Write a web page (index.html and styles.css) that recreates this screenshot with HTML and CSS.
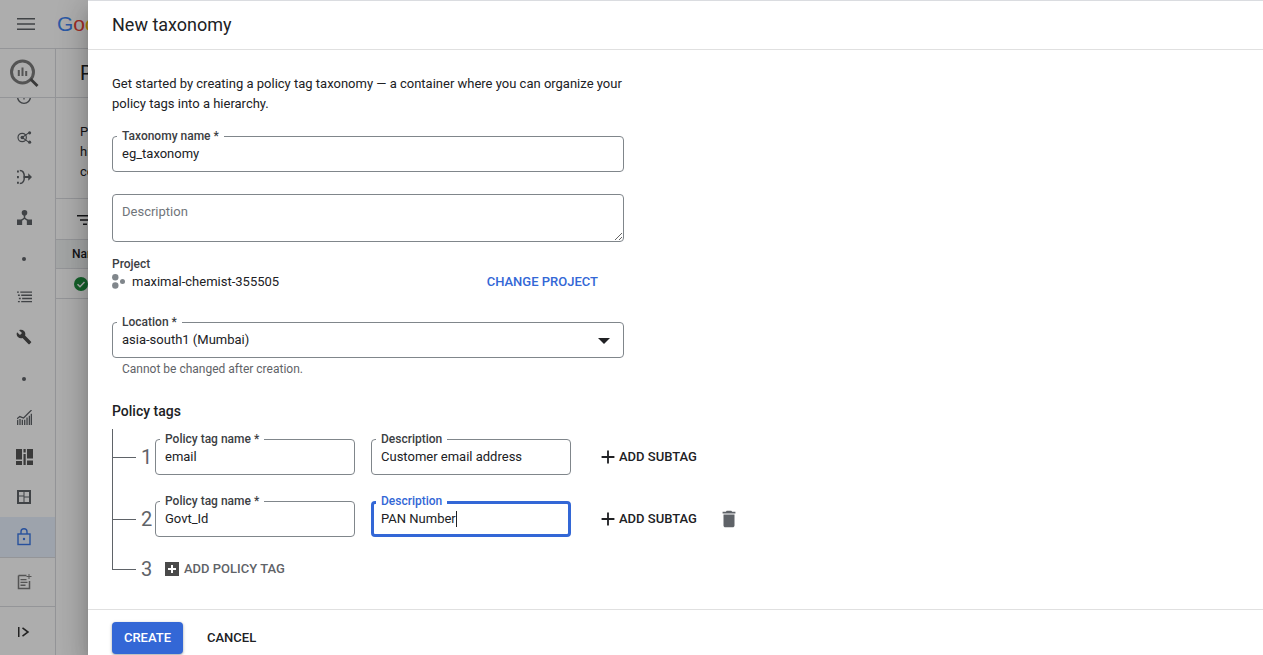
FILE: index.html
```html
<!DOCTYPE html>
<html lang="en">
<head>
<meta charset="utf-8">
<title>New taxonomy</title>
<link rel="stylesheet" href="styles.css">
</head>
<body>
<div class="app">
  <header class="topbar">
    <button class="menu-btn" aria-label="Menu">
      <svg viewBox="0 0 20 14" width="20" height="14"><path d="M1 1h18v1.600H1zM1 6.200h18v1.600H1zM1 11.400h18V13H1z"/></svg>
    </button>
    <div class="google"><span class="g-b">G</span><span class="g-r">o</span><span class="g-y">o</span><span class="g-b">g</span><span class="g-g">l</span><span class="g-r">e</span></div>
  </header>
  <div class="below">
    <aside class="rail">
      <div class="rail-logo">
        <svg viewBox="0 0 30 30" width="30" height="30"><circle cx="12.500" cy="14" r="11" fill="none" stroke="#7d7d7d" stroke-width="3"/><path d="M7.800 12h2v6h-2zM11.500 9.500h2V18h-2zM15.200 13h2v5h-2z" fill="#7d7d7d"/><path d="M19.500 22l2-2 7 7-2 2z" fill="#555"/></svg>
      </div>
      <nav class="rail-nav">
        <div class="rail-item rail-first"><svg viewBox="0 0 18 18" width="18" height="18"><circle cx="9" cy="9" r="6.400" fill="none" stroke="#5f6368" stroke-width="1.400"/><path d="M8.400 5h1.200v6.500H8.400z" fill="#5f6368"/></svg></div>
        <div class="rail-item"><svg viewBox="0 0 16 14" width="15" height="13"><circle cx="5.500" cy="7" r="4.500" fill="none" stroke="#5f6368" stroke-width="1.300"/><circle cx="5.500" cy="7" r="1.800" fill="#5f6368"/><path d="M5.500 7l7-5M5.500 7l7 5" stroke="#5f6368" stroke-width="1.200"/><circle cx="13.500" cy="2" r="1.700" fill="#5f6368"/><circle cx="13.500" cy="12" r="1.700" fill="#5f6368"/></svg></div>
        <div class="rail-item"><svg viewBox="0 0 16 16" width="15" height="16"><path d="M0 1h2v2.200H0zM0 7h2v2.200H0zM0 13h2v2.200H0z" fill="#5f6368"/><path d="M3 1c3 0 4.800 2.800 4.800 7S6 15 3 15" fill="none" stroke="#5f6368" stroke-width="1.600"/><path d="M7 7h5V4l4 4-4 4V9H7z" fill="#5f6368"/></svg></div>
        <div class="rail-item"><svg viewBox="0 0 16 16" width="15" height="15"><circle cx="8" cy="3" r="3" fill="#5f6368"/><path d="M7.200 5h1.600v3.300l3.600 2.500-.9 1.200L8 9.700 4.500 12l-.9-1.200 3.600-2.500z" fill="#5f6368"/><path d="M0 10h5.500v6H0zM10.500 10H16v6h-5.500z" fill="#5f6368"/></svg></div>
        <div class="rail-item"><span class="rail-dot"></span></div>
        <div class="rail-item"><svg viewBox="0 0 16 12" width="15" height="12"><path d="M0 0h2v1.500H0zM3.500 0H16v1.500H3.500zM1 3.400h2v1.500H1zM4.500 3.400H16v1.500H4.500zM2 6.800h2v1.500H2zM5.500 6.800H16v1.500H5.500zM1 10.200h2v1.500H1zM4.500 10.200H16v1.500H4.500z" fill="#5f6368"/></svg></div>
        <div class="rail-item"><svg viewBox="0 0 24 24" width="16" height="16"><path fill="#4d4d4d" d="M22.700 19l-9.100-9.100c.9-2.300.4-5-1.500-6.900-2-2-5-2.400-7.400-1.300L9 6 6 9 1.600 4.700C.4 7.100.9 10.100 2.900 12.100c1.900 1.900 4.600 2.400 6.900 1.500l9.100 9.100c.4.400 1 .4 1.400 0l2.300-2.300c.5-.4.5-1.100.1-1.400z"/></svg></div>
        <div class="rail-item"><span class="rail-dot"></span></div>
        <div class="rail-item"><svg viewBox="0 0 16 16" width="15" height="15"><path d="M0 9.500l3-2.500L7 8.500l5-5L15.500 0" fill="none" stroke="#5f6368" stroke-width="1.300"/><path d="M0 11l1.400-1V16H0zM2.500 9.500h1.400V16H2.500zM5 10.500h1.400V16H5zM7.500 10.500h1.400V16H7.500zM10 8h1.400v8H10zM12.500 6h1.400v10h-1.400zM14.600 4H16v12h-1.400z" fill="#5f6368"/></svg></div>
        <div class="rail-item"><svg viewBox="0 0 17 16" width="17" height="16"><path d="M0 0h6v10.500H0zM0 12h6v4H0zM7.500 0h2.200v3.500H7.500zM7.500 5h2.200v11H7.500zM11 0h6v9.500h-6zM11 11.500h6V16h-6z" fill="#565656"/></svg></div>
        <div class="rail-item"><svg viewBox="0 0 14 14" width="14" height="14"><path d="M0 0h14v14H0z" fill="#5f6368"/><path d="M2 2h4.500v3.500H2zM7.500 2H12v4.500H7.500zM2 6.500h4.500V12H2zM7.500 7.500H12V12H7.500z" fill="#fff"/></svg></div>
        <div class="rail-item rail-active"><svg viewBox="0 0 14 18" width="14" height="18"><rect x="1" y="6" width="12" height="10.500" fill="none" stroke="#3b78e7" stroke-width="1.400"/><path d="M4 6V3.800a3 3 0 0 1 6 0V6" fill="none" stroke="#3b78e7" stroke-width="1.400"/><circle cx="7" cy="11" r="1.200" fill="#3b78e7"/></svg></div>
      </nav>
      <div class="rail-foot-item"><svg viewBox="0 0 15 16" width="15" height="16"><path d="M1.500 1.500h8M1.500 1.500v13h11V7" fill="none" stroke="#7d7d7d" stroke-width="1.500"/><path d="M3.500 5h6v1.300h-6zM3.500 7.800h7v1.300h-7zM3.500 10.600h5v1.300h-5zM11.500 0h1v2h2v1h-2v2h-1V3h-2V2h2z" fill="#7d7d7d"/></svg></div>
      <div class="rail-foot-item rail-expand"><svg viewBox="0 0 12 10" width="12" height="10"><path d="M0 0h1.500v10H0z" fill="#333"/><path d="M4.500 .8L10 5 4.500 9.200" fill="none" stroke="#333" stroke-width="1.600"/></svg></div>
    </aside>
    <main class="page">
      <h1 class="page-title">Policy tag taxonomies</h1>
      <p class="page-intro">Policy tags let you control access<br>hierarchies of tags across your<br>columns in your tables.</p>
      <div class="page-filter">
        <svg viewBox="0 0 16 10" width="16" height="10"><path d="M0 0h16v1.600H0zM3 4.200h10v1.600H3zM6 8.400h4V10H6z" fill="#202124"/></svg>
      </div>
      <div class="table-head">Name</div>
      <div class="table-row">
        <svg viewBox="0 0 14 14" width="14" height="14"><circle cx="7" cy="7" r="7" fill="#1e8e3e"/><path d="M3.500 7.200l2.500 2.500 4.500-4.700" fill="none" stroke="#fff" stroke-width="1.500"/></svg>
      </div>
    </main>
  </div>

  <div class="scrim"></div>

  <section class="panel">
    <div class="panel-head"><h2 class="panel-title">New taxonomy</h2></div>
    <div class="panel-body">
      <p class="intro">Get started by creating a policy tag taxonomy — a container where you can organize your policy tags into a hierarchy.</p>

      <div class="field field-wide field-name">
        <span class="field-label">Taxonomy name *</span>
        <div class="field-value">eg_taxonomy</div>
      </div>

      <div class="field field-wide field-area">
        <textarea class="field-textarea" placeholder="Description"></textarea>
      </div>

      <div class="project">
        <div class="project-label">Project</div>
        <div class="project-row">
          <div class="project-name">
            <svg viewBox="0 0 13 15" width="13" height="15"><circle cx="3.300" cy="3.300" r="3.200" fill="#80868b"/><circle cx="3.300" cy="11.500" r="3.200" fill="#80868b"/><circle cx="10.500" cy="7.400" r="2.500" fill="#80868b"/></svg>
            <span>maximal-chemist-355505</span>
          </div>
          <span class="link-btn">CHANGE PROJECT</span>
        </div>
      </div>

      <div class="field field-wide field-location">
        <span class="field-label">Location *</span>
        <div class="field-value">asia-south1 (Mumbai)</div>
        <span class="select-arrow"></span>
      </div>
      <div class="hint">Cannot be changed after creation.</div>

      <h3 class="section-title">Policy tags</h3>

      <div class="tree">
        <div class="tree-row">
          <span class="branch"></span><span class="num">1</span>
          <div class="field field-tag">
            <span class="field-label">Policy tag name *</span>
            <div class="field-value">email</div>
          </div>
          <div class="field field-tag">
            <span class="field-label">Description</span>
            <div class="field-value">Customer email address</div>
          </div>
          <span class="subtag">
            <svg viewBox="0 0 24 24" width="22" height="22"><path d="M19 13h-6v6h-2v-6H5v-2h6V5h2v6h6v2z"/></svg>
            <span class="action-text">ADD SUBTAG</span>
          </span>
        </div>
        <div class="tree-row">
          <span class="branch"></span><span class="num">2</span>
          <div class="field field-tag">
            <span class="field-label">Policy tag name *</span>
            <div class="field-value">Govt_Id</div>
          </div>
          <div class="field field-tag field-focus">
            <span class="field-label">Description</span>
            <div class="field-value">PAN Number<span class="caret"></span></div>
          </div>
          <span class="subtag">
            <svg viewBox="0 0 24 24" width="22" height="22"><path d="M19 13h-6v6h-2v-6H5v-2h6V5h2v6h6v2z"/></svg>
            <span class="action-text">ADD SUBTAG</span>
          </span>
          <svg class="trash" viewBox="0 0 24 24" width="22" height="22"><path d="M6 19c0 1.100.9 2 2 2h8c1.100 0 2-.9 2-2V7H6v12zM19 4h-3.500l-1-1h-5l-1 1H5v2h14V4z"/></svg>
        </div>
        <div class="tree-row tree-last">
          <span class="branch"></span><span class="num">3</span>
          <span class="add-tag">
            <svg viewBox="0 0 14 14" width="14" height="14"><path d="M0 0h14v14H0z" fill="#4a4a4a"/><path d="M6 3h2v3h3v2H8v3H6V8H3V6h3z" fill="#fff"/></svg>
            <span class="action-text">ADD POLICY TAG</span>
          </span>
        </div>
      </div>
    </div>
    <footer class="panel-foot">
      <span class="btn-create">CREATE</span>
      <span class="btn-cancel">CANCEL</span>
    </footer>
  </section>
</div>
</body>
</html>
```
FILE: styles.css
```css
* { box-sizing: border-box; }
html, body { margin: 0; height: 100%; overflow: hidden; }
body { font-family: Roboto, "Liberation Sans", sans-serif; color: #202124; background: #fff; }
h1, h2, h3, p { margin: 0; font-weight: 400; }

.app { position: relative; width: 1263px; height: 655px; overflow: hidden; }

/* background page */
.topbar { height: 49px; display: flex; align-items: center; border-bottom: 1px solid #dadce0; }
.menu-btn { width: 52px; height: 48px; padding: 0; border: 0; background: none; display: flex; align-items: center; justify-content: center; }
.menu-btn svg { fill: #5f6368; }
.google { font: 400 21px "Liberation Sans", sans-serif; margin-left: 5px; }
.g-b { color: #4285f4; } .g-r { color: #ea4335; } .g-y { color: #fbbc05; } .g-g { color: #34a853; }

.below { display: flex; height: 606px; }
.rail { width: 56px; flex: none; border-right: 1px solid #dadce0; display: flex; flex-direction: column; }
.rail-logo { height: 49px; flex: none; display: flex; align-items: center; padding-left: 10px; border-bottom: 1px solid #dadce0; }
.rail-nav { height: 460px; flex: none; overflow: hidden; border-bottom: 1px solid #dadce0; }
.rail-item { height: 40px; display: flex; align-items: center; justify-content: center; padding-right: 7px; }
.rail-first { margin-top: -21px; }
.rail-dot { width: 4px; height: 4px; margin-top: 3px; border-radius: 50%; background: #5f6368; }
.rail-active { background: #e8f0fe; }
.rail-foot-item { height: 49px; flex: none; display: flex; align-items: center; justify-content: center; padding-right: 7px; border-bottom: 1px solid #dadce0; }
.rail-expand { border-bottom: 0; }

.page { flex: 1; min-width: 0; }
.page-title { height: 49px; font-size: 20px; line-height: 48px; padding-left: 24px; border-bottom: 1px solid #dadce0; }
.page-intro { height: 101px; padding: 24px 0 0 24px; font-size: 13px; line-height: 20px; border-bottom: 1px solid #dadce0; }
.page-filter { height: 41px; padding: 16px 0 0 21px; border-bottom: 1px solid #dadce0; }
.page-filter svg { display: block; }
.table-head { height: 29px; background: #f1f3f4; padding-left: 16px; font-size: 12px; font-weight: 500; line-height: 29px; color: #202124; border-bottom: 1px solid #dadce0; }
.table-row { height: 30px; padding: 8px 0 0 18px; border-bottom: 1px solid #dadce0; }
.table-row svg { display: block; }

.scrim { position: absolute; inset: 0; background: rgba(0, 0, 0, .32); }

/* side panel */
.panel { position: absolute; left: 88px; top: 0; right: 0; bottom: 0; background: #fff; display: flex; flex-direction: column; border-top: 1px solid #dadce0;
  box-shadow: 0 8px 10px -5px rgba(0,0,0,.2), 0 16px 24px 2px rgba(0,0,0,.14), 0 6px 30px 5px rgba(0,0,0,.12); }
.panel-head { height: 49px; flex: none; display: flex; align-items: center; padding-left: 24px; border-bottom: 1px solid #e0e0e0; }
.panel-title { font-size: 18px; line-height: 48px; color: #202124; }
.panel-body { flex: 1; min-height: 0; padding: 24px 24px 0; }
.intro { width: 520px; font-size: 13px; line-height: 20px; color: #202124; }

.field { position: relative; border: 1px solid #80868b; border-radius: 4px; height: 36px; }
.field-wide { width: 512px; }
.field-name { margin-top: 22px; }
.field-area { margin-top: 22px; height: 48px; }
.field-location { margin-top: 32px; }
.field-label { position: absolute; left: 4px; top: -8px; padding: 0 5px; background: #fff; font-size: 12px; font-weight: 500; line-height: 14px; color: #3c4043; white-space: nowrap; }
.field-value { padding: 0 9px; font-size: 13px; line-height: 34px; color: #202124; white-space: nowrap; }
.field-textarea { display: block; width: 100%; height: 100%; min-height: 46px; padding: 9px; border: 0; outline: 0; border-radius: 4px; background: transparent; font: 400 13px/16px Roboto, sans-serif; color: #202124; resize: vertical; }
.field-textarea::placeholder { color: #70757a; opacity: 1; }
.select-arrow { position: absolute; right: 13px; top: 15px; width: 0; height: 0; border-left: 6px solid transparent; border-right: 6px solid transparent; border-top: 6px solid #202124; }
.hint { margin: 4px 0 0 10px; font-size: 12px; line-height: 14px; color: #5f6368; }

.project { margin-top: 15px; }
.project-label { font-size: 12px; font-weight: 500; line-height: 14px; color: #3c4043; }
.project-row { width: 512px; margin: 1px 0 1px; display: flex; align-items: center; justify-content: space-between; height: 18px; }
.project-name { display: flex; align-items: center; gap: 7px; font-size: 13px; color: #202124; }
.link-btn { margin-right: 26px; font-size: 13px; font-weight: 500; color: #3367d6; }

.section-title { margin-top: 25px; font-size: 14px; font-weight: 500; line-height: 20px; color: #202124; }

.tree { height: 141px; margin-top: 8px; border-left: 1px solid #5f6368; padding-top: 10px; display: flex; flex-direction: column; gap: 26px; }
.tree-row { display: flex; align-items: center; height: 36px; }
.branch { width: 23px; flex: none; border-top: 1px solid #5f6368; }
.num { width: 19px; flex: none; padding-left: 5px; font-size: 20px; line-height: 24px; color: #5f6368; }
.field-tag { width: 200px; flex: none; margin-right: 16px; }
.field-focus { border: 3px solid #3367d6; }
.field-focus .field-label { left: 2px; top: -10px; color: #3367d6; }
.field-focus .field-value { padding: 0 7px; line-height: 30px; }
.caret { display: inline-block; width: 1px; height: 16px; background: #202124; vertical-align: -4px; }
.subtag { display: flex; align-items: center; margin-left: 10px; font-size: 13px; font-weight: 500; color: #202124; white-space: nowrap; }
.subtag svg { fill: #202124; }
.action-text { margin-bottom: 2px; }
.trash { margin-left: 21px; fill: #5f6368; }
.tree-last { height: 18px; margin-top: -3px; }
.add-tag { display: flex; align-items: center; gap: 5px; margin-left: 10px; font-size: 13px; font-weight: 500; color: #5f6368; }

.panel-foot { height: 46px; flex: none; display: flex; align-items: flex-start; padding: 12px 0 0 24px; border-top: 1px solid #e0e0e0; }
.btn-create { width: 71px; height: 32px; border-radius: 4px; background: #3367d6; color: #fff; font-size: 13px; font-weight: 500; line-height: 32px; text-align: center; box-shadow: 0 1px 2px rgba(60,64,67,.3), 0 1px 3px 1px rgba(60,64,67,.15); }
.btn-cancel { margin-left: 24px; font-size: 13px; font-weight: 500; line-height: 32px; color: #202124; }
```
